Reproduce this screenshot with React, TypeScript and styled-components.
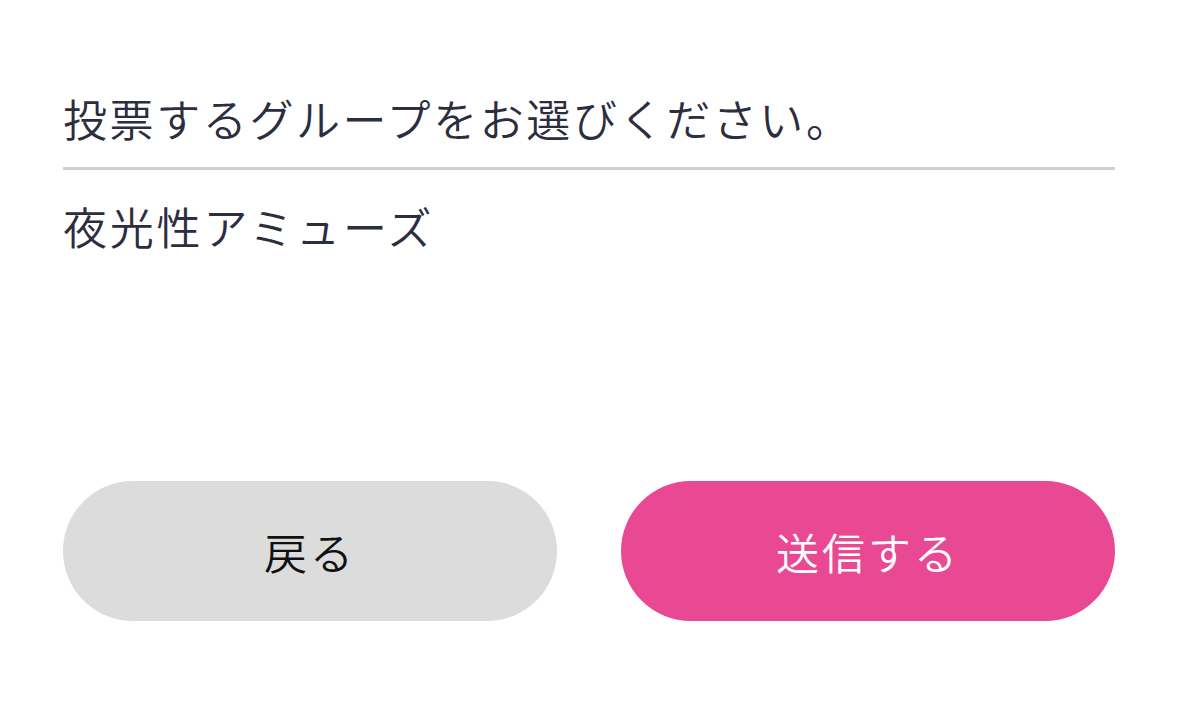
import styled, { createGlobalStyle } from 'styled-components';

const GlobalStyle = createGlobalStyle`
  html, body {
    margin: 0;
    padding: 0;
    background: #fff;
  }
  body {
    font-family: 'Noto Sans CJK JP', 'Noto Sans', sans-serif;
  }
`;

const Page = styled.main`
  width: 1179px;
  height: 704px;
  box-sizing: border-box;
  padding: 84px 64px 0 63px;
  display: flex;
  flex-direction: column;
`;

const Heading = styled.h2`
  margin: 0;
  padding-bottom: 15px;
  border-bottom: 3px solid #cfcfd1;
  font-size: 44px;
  font-weight: 350;
  line-height: 68px;
  color: #2c2d3e;
  letter-spacing: 2.6px;
`;

const GroupName = styled.p`
  margin: 22px 0 0;
  font-size: 44px;
  font-weight: 350;
  line-height: 68px;
  color: #2c2d3e;
  letter-spacing: 2.8px;
`;

const Actions = styled.div`
  margin-top: 221px;
  display: grid;
  grid-template-columns: 1fr 1fr;
  column-gap: 64px;
`;

const Button = styled.button<{ $primary?: boolean }>`
  height: 140px;
  border: none;
  border-radius: 70px;
  font-family: inherit;
  font-size: 43px;
  font-weight: 350;
  letter-spacing: 3px;
  cursor: pointer;
  background: ${(p) => (p.$primary ? '#e94893' : '#dcdcdc')};
  color: ${(p) => (p.$primary ? '#fff' : '#111')};
`;

const App = () => {
  return (
    <>
      <GlobalStyle />
      <Page>
        <Heading>投票するグループをお選びください。</Heading>
        <GroupName>夜光性アミューズ</GroupName>
        <Actions>
          <Button>戻る</Button>
          <Button $primary>送信する</Button>
        </Actions>
      </Page>
    </>
  );
};

export default App;
